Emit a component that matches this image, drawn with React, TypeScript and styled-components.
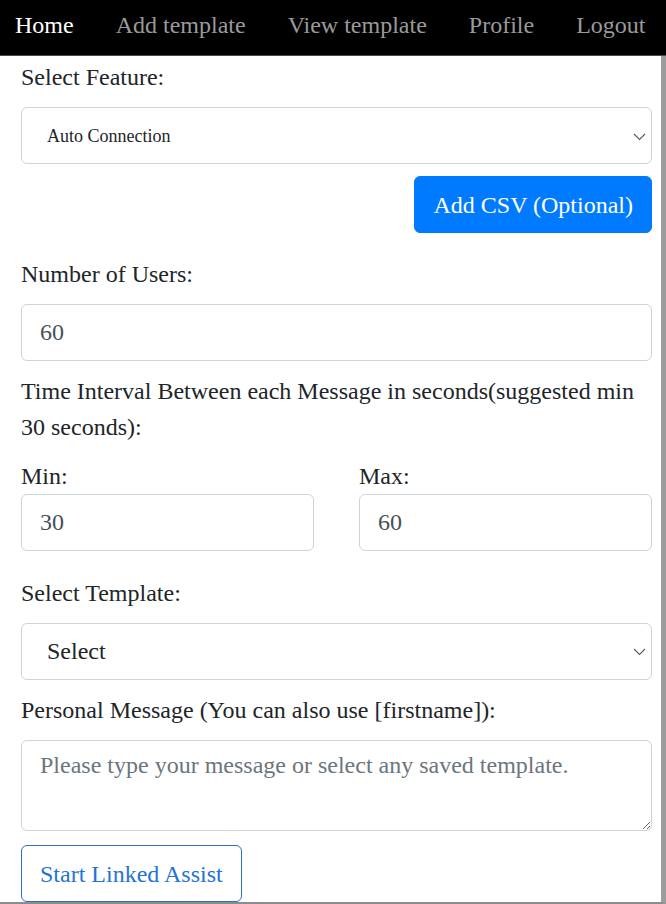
import React from "react";
import styled, { createGlobalStyle } from "styled-components";

const GlobalStyle = createGlobalStyle`
  * { box-sizing: border-box; }
  html, body { margin: 0; padding: 0; background: #fff; }
  body {
    font-family: "Liberation Serif", "Times New Roman", serif;
    font-size: 24px;
    line-height: 36px;
    color: #212529;
  }
`;

const Page = styled.div`
  width: 666px;
  height: 904px;
  overflow: hidden;
  display: flex;
  flex-direction: column;
`;

const NavBar = styled.nav`
  flex: 0 0 auto;
  height: 56px;
  background: #000;
  border-bottom: 1px solid #4a4a4a;
  display: flex;
  align-items: flex-start;
  gap: 42px;
  padding: 7px 0 0 15px;
`;

const NavLink = styled.a<{ $active?: boolean }>`
  font-size: 24px;
  line-height: 36px;
  color: ${(p) => (p.$active ? "#ffffff" : "#9a9a9a")};
  text-decoration: none;
  white-space: nowrap;
  cursor: pointer;
`;

const Main = styled.main`
  flex: 1 1 auto;
  border-right: 5px solid #9c9c9c;
  border-bottom: 2px solid #8c8c8c;
  padding: 3px 9px 0 21px;
  overflow: hidden;
  display: flex;
  flex-direction: column;
`;

const Label = styled.label<{ $mt?: number; $mb?: number }>`
  display: block;
  margin-top: ${(p) => p.$mt ?? 0}px;
  margin-bottom: ${(p) => p.$mb ?? 12}px;
  font-size: 24px;
  line-height: 36px;
  color: #212529;
`;

const SelectWrap = styled.div`
  position: relative;
  width: 100%;
`;

const Select = styled.select<{ $fs?: number }>`
  display: block;
  width: 100%;
  height: 57px;
  appearance: none;
  -webkit-appearance: none;
  background: #fff;
  border: 1px solid #ced4da;
  border-radius: 6px;
  padding: 0 30px 0 25px;
  font-family: "Liberation Serif", "Times New Roman", serif;
  font-size: ${(p) => p.$fs ?? 24}px;
  color: #212529;
  outline: none;
`;

const Chevron = styled.svg`
  position: absolute;
  right: 6px;
  top: 50%;
  width: 13px;
  height: 8px;
  margin-top: -3px;
  pointer-events: none;
`;

const Input = styled.input`
  display: block;
  width: 100%;
  height: 57px;
  border: 1px solid #ced4da;
  border-radius: 6px;
  padding: 0 18px;
  font-family: "Liberation Serif", "Times New Roman", serif;
  font-size: 24px;
  color: #495057;
  background: #fff;
  outline: none;
`;

const TextArea = styled.textarea`
  display: block;
  width: 100%;
  height: 92px;
  border: 1px solid #ced4da;
  border-radius: 6px;
  padding: 6px 18px;
  font-family: "Liberation Serif", "Times New Roman", serif;
  font-size: 24px;
  line-height: 36px;
  color: #495057;
  resize: vertical;
  outline: none;
  &::placeholder { color: #6c757d; }
`;

const ButtonRow = styled.div<{ $mt: number; $align?: string }>`
  display: flex;
  justify-content: ${(p) => p.$align ?? "flex-start"};
  margin-top: ${(p) => p.$mt}px;
`;

const Button = styled.button<{ $variant: "solid" | "outline" }>`
  height: 57px;
  padding: 0 18px;
  border-radius: 6px;
  font-family: "Liberation Serif", "Times New Roman", serif;
  font-size: 24px;
  line-height: 36px;
  cursor: pointer;
  white-space: nowrap;
  border: 1px solid ${(p) => (p.$variant === "solid" ? "#007bff" : "#2b70c4")};
  background: ${(p) => (p.$variant === "solid" ? "#007bff" : "#ffffff")};
  color: ${(p) => (p.$variant === "solid" ? "#ffffff" : "#1f74d6")};
`;

const TwoCols = styled.div`
  display: grid;
  grid-template-columns: 1fr 1fr;
  column-gap: 45px;
  margin-top: 13px;
`;

const Field = styled.div`
  display: flex;
  flex-direction: column;
`;

const ArrowIcon = () => (
  <Chevron viewBox="0 0 13 8">
    <polyline points="1,1 6.5,6.5 12,1" fill="none" stroke="#5a5a5a" strokeWidth="1.1" />
  </Chevron>
);

export default function App() {
  return (
    <>
      <GlobalStyle />
      <Page>
        <NavBar>
          <NavLink $active>Home</NavLink>
          <NavLink>Add template</NavLink>
          <NavLink>View template</NavLink>
          <NavLink>Profile</NavLink>
          <NavLink>Logout</NavLink>
        </NavBar>
        <Main>
          <Label>Select Feature:</Label>
          <SelectWrap>
            <Select $fs={18} defaultValue="auto">
              <option value="auto">Auto Connection</option>
            </Select>
            <ArrowIcon />
          </SelectWrap>
          <ButtonRow $mt={12} $align="flex-end">
            <Button $variant="solid">Add CSV (Optional)</Button>
          </ButtonRow>

          <Label $mt={23}>Number of Users:</Label>
          <Input defaultValue="60" />

          <Label $mt={12} $mb={0}>
            Time Interval Between each Message in seconds(suggested min 30 seconds):
          </Label>

          <TwoCols>
            <Field>
              <Label $mb={0}>Min:</Label>
              <Input defaultValue="30" />
            </Field>
            <Field>
              <Label $mb={0}>Max:</Label>
              <Input defaultValue="60" />
            </Field>
          </TwoCols>

          <Label $mt={24}>Select Template:</Label>
          <SelectWrap>
            <Select defaultValue="">
              <option value="">Select</option>
            </Select>
            <ArrowIcon />
          </SelectWrap>

          <Label $mt={12}>Personal Message (You can also use [firstname]):</Label>
          <TextArea placeholder="Please type your message or select any saved template." />

          <ButtonRow $mt={14}>
            <Button $variant="outline">Start Linked Assist</Button>
          </ButtonRow>
        </Main>
      </Page>
    </>
  );
}
